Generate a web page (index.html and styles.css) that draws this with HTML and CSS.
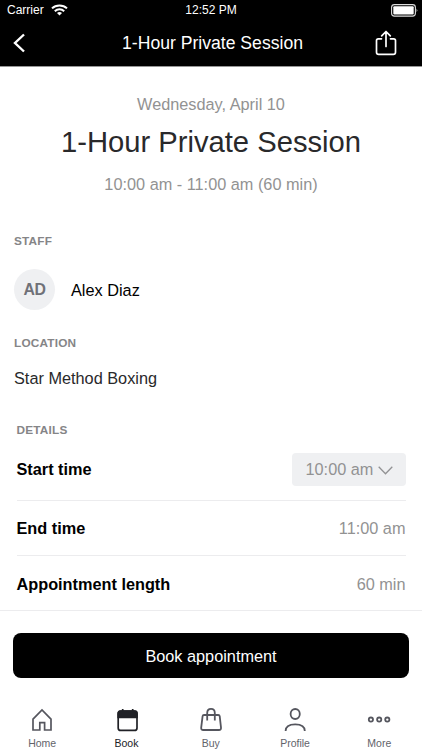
FILE: index.html
```html
<!DOCTYPE html>
<html lang="en">
<head>
<meta charset="utf-8">
<title>1-Hour Private Session</title>
<link rel="stylesheet" href="styles.css">
</head>
<body>
<div class="app">
  <header class="top">
    <div class="status">
      <div class="carrier">Carrier
        <svg width="17" height="12" viewBox="0 0 17 12" fill="none" stroke="#fff" stroke-width="2"><path d="M1 4.400C5 .4 12 .4 16 4.400M3.800 7.200C6.500 4.600 10.500 4.600 13.200 7.200"/><path d="M8.500 11.500L6 9C7.400 7.700 9.600 7.700 11 9Z" fill="#fff" stroke="none"/></svg>
      </div>
      <div class="clock">12:52 PM</div>
      <svg class="battery" width="28" height="13" viewBox="0 0 28 13"><rect x=".6" y=".6" width="23.800" height="11.500" rx="2.800" fill="none" stroke="#ddd" stroke-width="1.100"/><rect x="2.300" y="2.300" width="20.400" height="8.100" rx="1" fill="#fff"/><path d="M25.600 4.400Q27.300 6.300 25.600 8.300Z" fill="#ddd"/></svg>
    </div>
    <div class="nav">
      <svg width="13" height="20" viewBox="0 0 13 20" fill="none" stroke="#fff" stroke-width="2.400"><path d="M11 1.500L2 10L11 18.500"/></svg>
      <div class="nav-title">1-Hour Private Session</div>
      <svg width="22" height="26" viewBox="0 0 22 26" fill="none" stroke="#fff" stroke-width="1.700" stroke-linecap="round" stroke-linejoin="round"><path d="M6.500 8.800H3.300Q1.500 8.800 1.500 10.600V22.200Q1.500 24.400 3.700 24.400H18.300Q20.500 24.400 20.500 22.200V10.600Q20.500 8.800 18.700 8.800H15.500M11 16.500V1.700M6.700 5.800L11 1.500L15.300 5.800"/></svg>
    </div>
  </header>
  <main>
    <section class="hero">
      <p class="date">Wednesday, April 10</p>
      <h1>1-Hour Private Session</h1>
      <p class="range">10:00 am - 11:00 am (60 min)</p>
    </section>
    <section class="info">
      <h2>STAFF</h2>
      <div class="person"><span class="avatar">AD</span><span>Alex Diaz</span></div>
      <h2>LOCATION</h2>
      <p class="place">Star Method Boxing</p>
    </section>
    <section class="details">
      <h2>DETAILS</h2>
      <div class="row start"><b>Start time</b><span class="select"><span>10:00 am</span><svg width="15" height="11" viewBox="0 0 15 11" fill="none" stroke="#929294" stroke-width="1.300"><path d="M.7 2.800L7.500 9.800L14.300 2.800"/></svg></span></div>
      <div class="row"><b>End time</b><span>11:00 am</span></div>
      <div class="row last"><b>Appointment length</b><span>60 min</span></div>
    </section>
  </main>
  <div class="action"><button class="book">Book appointment</button></div>
  <nav class="tabs">
    <div class="tab"><svg width="24" height="24" viewBox="0 0 24 24" fill="none" stroke="#55565e" stroke-width="1.700"><path d="M3 22V11.100L12 1.900L21 11.100V22H14.600V14.600H9.800V22Z"/></svg><span>Home</span></div>
    <div class="tab active"><svg width="26" height="24" viewBox="0 0 26 24" fill="none" stroke="#202126" stroke-width="1.700"><rect x="5.200" y="3.200" width="18.800" height="19.200" rx="2.500"/><path d="M5.200 9.500V5.700Q5.200 3.200 7.700 3.200H21.500Q24 3.200 24 5.700V9.500ZM9.700 1V4M19.700 1V4" fill="#202126"/></svg><span>Book</span></div>
    <div class="tab"><svg width="24" height="24" viewBox="0 0 24 24" fill="none" stroke="#55565e" stroke-width="1.800" stroke-linejoin="round"><path d="M5 7H19.200Q20.500 7 20.700 8.100L22 19.600Q22.200 22 20 22H4.200Q2 22 2.200 19.600L3.600 8.100Q3.800 7 5 7ZM8.200 12.600V4.900C8.200-.4 15.800-.4 15.800 4.900V12.600"/></svg><span>Buy</span></div>
    <div class="tab"><svg width="24" height="24" viewBox="0 0 24 24" fill="none" stroke="#55565e" stroke-width="1.800"><ellipse cx="12.200" cy="6" rx="4.600" ry="5"/><path d="M2.600 23C2.600 18.300 5.700 16.300 12.200 16.300S21.800 18.300 21.800 23"/></svg><span>Profile</span></div>
    <div class="tab"><svg width="24" height="24" viewBox="0 0 24 24" fill="none" stroke="#55565e" stroke-width="1.800"><circle cx="3.900" cy="11.600" r="2.100"/><circle cx="12.200" cy="11.600" r="2.100"/><circle cx="20.300" cy="11.600" r="2.100"/></svg><span>More</span></div>
  </nav>
</div>
</body>
</html>
```
FILE: styles.css
```css
* { box-sizing: border-box; }
body { margin: 0; background: #fff; font: 16.3px/20px "Liberation Sans", Arial, sans-serif; color: #000; }
h1, h2, p { margin: 0; font-weight: 400; }
svg { display: block; flex: none; }
.app { display: flex; flex-direction: column; width: 422px; height: 750px; overflow: hidden; }
.top { height: 67px; background: #000; color: #fff; border-bottom: 1px solid #969696; }
.status { display: grid; grid-template-columns: 1fr auto 1fr; align-items: center; height: 20px; padding: 0 3px 0 7px; font-size: 12px; }
.carrier { display: flex; align-items: center; gap: 7px; }
.clock { padding-right: 4px; }
.battery { justify-self: end; }
.nav { display: grid; grid-template-columns: 30px 1fr 30px; align-items: center; justify-items: center; height: 46px; padding: 0 21px 0 4px; }
.nav-title { font-size: 17.600px; padding-left: 20px; }
.hero { height: 164px; padding-top: 27px; text-align: center; color: #929292; }
h1 { margin: 18px 0 22px; font-size: 29.200px; line-height: 20px; color: #29292b; }
h2 { font-size: 11.800px; line-height: 21px; font-weight: 700; letter-spacing: .2px; color: #858587; }
.info { height: 188px; padding-left: 14px; }
.person { display: flex; align-items: center; gap: 16px; height: 41px; margin: 17px 0 23px; }
.avatar { width: 41px; height: 41px; border-radius: 50%; background: #eff0f2; color: #6f7178; font-weight: 700; font-size: 15.800px; letter-spacing: -.3px; line-height: 41px; text-align: center; }
.place { margin-top: 14px; color: #29292b; }
.details { height: 191px; padding: 1px 16.500px 0; }
.row { display: flex; align-items: center; justify-content: space-between; height: 55px; border-bottom: 1px solid #ececee; color: #929292; }
.row b { color: #000; }
.start { height: 60px; padding-bottom: 3px; }
.last { border: 0; }
.select { display: flex; align-items: center; gap: 5px; width: 114px; height: 33px; padding-left: 14px; border-radius: 4px; background: #eff0f2; }
.action { height: 90px; padding: 22px 13px 0; border-top: 1px solid #ececee; }
.book { width: 100%; height: 45px; padding: 0; border: 0; border-radius: 8px; background: #000; color: #fff; font: inherit; }
.tabs { display: grid; grid-template-columns: repeat(5, 84.300px); height: 50px; }
.tab { display: flex; flex-direction: column; align-items: center; gap: 1px; padding-top: 8px; font-size: 10.500px; line-height: 20px; color: #62636a; }
.active { color: #202126; }
```
